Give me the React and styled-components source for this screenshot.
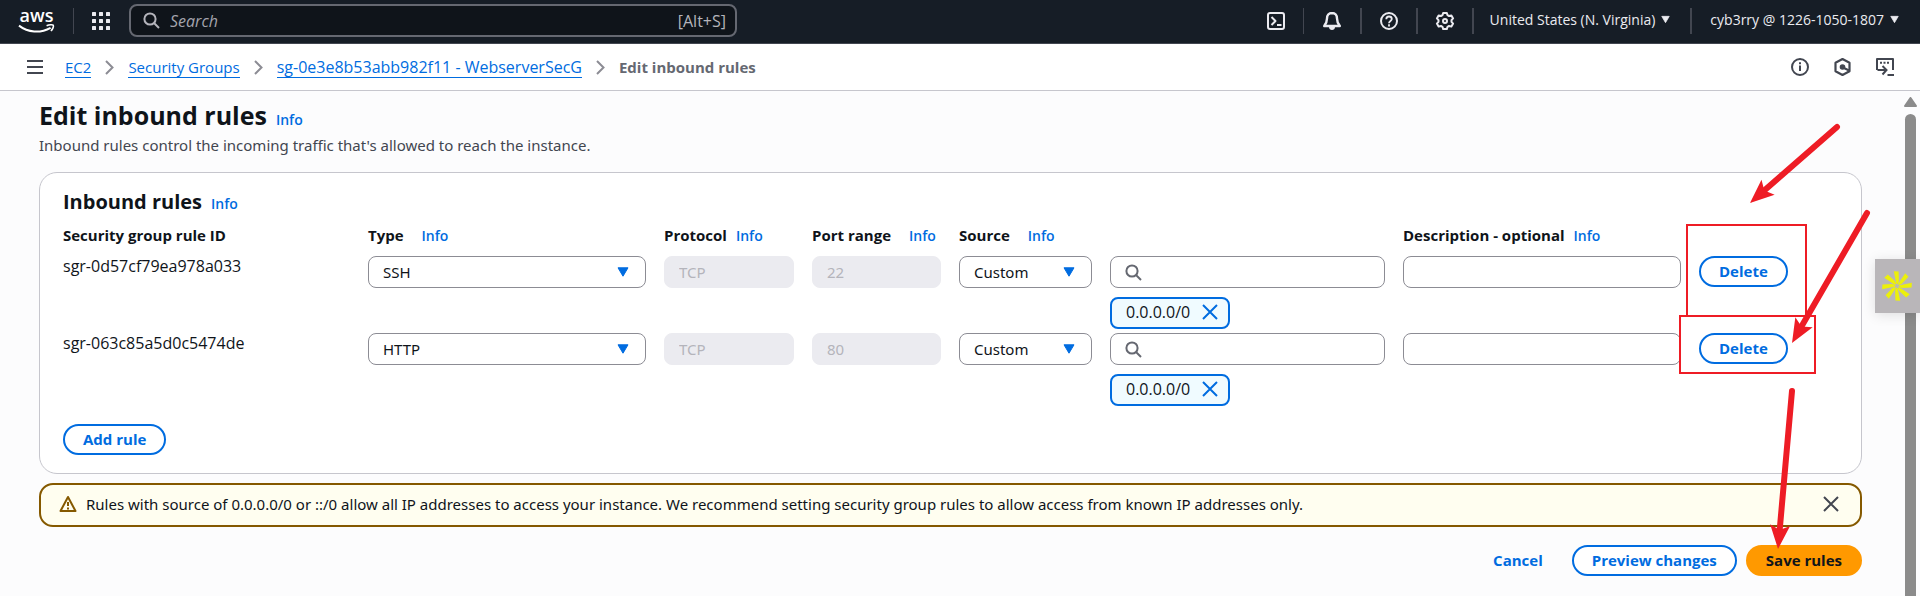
import React from "react";
import styled, { createGlobalStyle, css } from "styled-components";

const BLUE = "#006ce0";
const INK = "#0f141a";
const RED = "#ee1c25";
const HEADING_FONT = `"Open Sans", "Noto Sans", sans-serif`;

const GlobalStyle = createGlobalStyle`
  *, *::before, *::after { box-sizing: border-box; }
  body {
    margin: 0;
    background: #fcfcfd;
    color: ${INK};
    font-family: "Noto Sans", "Open Sans", sans-serif;
    font-size: 15px;
    line-height: 22px;
  }
  button, input, select { font: inherit; color: inherit; }
  svg { display: block; flex: none; }
`;

const Page = styled.div`
  position: relative;
  display: flex;
  flex-direction: column;
  min-height: 100vh;
  overflow: hidden;
`;

/* Global navigation */
const TopBar = styled.header`
  display: flex;
  align-items: flex-start;
  height: 44px;
  padding: 4px 21px 0 18px;
  background: #161d26;
  border-bottom: 1px solid #424650;
  color: #ebebf0;
  font-family: ${HEADING_FONT};
  font-size: 14px;
`;

const Cluster = styled.div`
  display: flex;
  align-items: center;
  height: 33px;
`;

const NavActions = styled(Cluster)`
  margin-left: auto;
`;

const Divider = styled.span`
  width: ${(p) => (p.$thin ? 1 : 2)}px;
  height: 26px;
  background: #424650;
`;

const LogoLink = styled.a`
  display: block;
  margin-right: 18px;
`;

const IconButton = styled.button`
  display: flex;
  align-items: center;
  justify-content: center;
  padding: 0 ${(p) => p.$pad || 0}px;
  border: 0;
  background: none;
  color: inherit;
  cursor: pointer;
`;

const NavSearch = styled.label`
  display: flex;
  align-items: center;
  gap: 10px;
  flex: 0 1 608px;
  height: 33px;
  margin-left: 1px;
  padding: 0 9px 0 12px;
  border: 2px solid #656871;
  border-radius: 8px;
  background: ${INK};
  color: #b4b4bb;
  font-size: 16px;
`;

const NavSearchInput = styled.input`
  flex: 1;
  min-width: 0;
  padding: 0;
  border: 0;
  outline: 0;
  background: none;
  &::placeholder { color: #a4a4ad; font-style: italic; opacity: 1; }
`;

const NavMenu = styled.button`
  display: flex;
  align-items: center;
  gap: 6px;
  padding: 0 ${(p) => (p.$last ? 0 : 20)}px 2px ${(p) => (p.$last ? 18 : 16)}px;
  border: 0;
  background: none;
  color: #ebebf0;
  white-space: nowrap;
  cursor: pointer;
`;

/* Breadcrumb bar */
const CrumbBar = styled.div`
  display: flex;
  align-items: center;
  height: 47px;
  padding: 0 26px 0 27px;
  background: #fff;
  border-bottom: 1px solid #c6c6cd;
  color: #424650;
`;

const Crumbs = styled.nav`
  display: flex;
  align-items: center;
  gap: 14px;
  margin-left: 22px;
`;

const CrumbLink = styled.a`
  color: ${BLUE};
  text-decoration: none;
  border-bottom: 1px solid ${BLUE};
  font-family: ${HEADING_FONT};
  font-size: ${(p) => (p.$resource ? 16 : 15)}px;
  line-height: 20px;
`;

const CrumbCurrent = styled.span`
  color: #656871;
  font-family: ${HEADING_FONT};
  font-weight: 700;
  line-height: 20px;
`;

const Tools = styled.div`
  display: flex;
  gap: 25px;
  margin-left: auto;
`;

/* Content */
const Body = styled.div`
  display: flex;
  flex: 1;
`;

const Main = styled.main`
  flex: 1;
  min-width: 0;
  padding: 8px 39px 20px;
`;

const TitleRow = styled.div`
  display: flex;
  align-items: baseline;
  gap: 9px;
`;

const Title = styled.h1`
  margin: 0;
  font-family: ${HEADING_FONT};
  font-size: 25px;
  line-height: 32px;
  font-weight: 700;
`;

const Subtitle = styled.p`
  margin: 3px 0 0;
  color: #424650;
`;

const Panel = styled.section`
  margin-top: 16px;
  padding: 15px 23px 18px;
  border: 1px solid #c6c6cd;
  border-radius: 18px;
  background: #fff;
`;

const PanelTitle = styled.h2`
  margin: 0;
  font-family: ${HEADING_FONT};
  font-size: 20px;
  line-height: 28px;
  font-weight: 700;
`;

const InfoLink = styled.a`
  color: ${BLUE};
  font-family: ${HEADING_FONT};
  font-size: 14px;
  line-height: 16px;
  font-weight: 600;
  text-decoration: none;
`;

const RulesTable = styled.table`
  display: block;
  margin-top: 8px;
`;

const TableHead = styled.thead`
  display: block;
  margin-bottom: 10px;
`;

const TableRows = styled.tbody`
  display: grid;
  gap: 4px;
`;

const TableRow = styled.tr`
  display: grid;
  grid-template-columns:
    minmax(0, 287fr) minmax(0, 278fr) minmax(0, 130fr) minmax(0, 129fr)
    minmax(0, 133fr) minmax(0, 275fr) minmax(0, 278fr) minmax(89px, 139fr);
  column-gap: 18px;
`;

const HeadCell = styled.th`
  display: flex;
  align-items: baseline;
  gap: ${(p) => p.$gap || 10}px;
  padding: 0;
  text-align: left;
  font-family: ${HEADING_FONT};
  font-weight: 700;
  white-space: nowrap;
`;

const Cell = styled.td`
  display: block;
  padding: 0;
`;

const RuleIdCell = styled(Cell)`
  font-family: ${HEADING_FONT};
  font-size: 16px;
  line-height: 20px;
`;

const fieldBox = css`
  width: 100%;
  height: 32px;
  border: 1px solid #8c8c94;
  border-radius: 8px;
  background: #fff;
  outline: 0;
`;

const TextInput = styled.input`
  ${fieldBox}
  display: block;
  padding: 0 14px;
  &:disabled {
    border-color: #ebebf0;
    background: #ebebf0;
    color: #b4b4bb;
  }
`;

const SelectWrap = styled.div`
  display: grid;
  align-items: center;
  justify-items: end;
  color: ${BLUE};
  & > * { grid-area: 1 / 1; }
  & > svg { margin-right: 17px; pointer-events: none; }
`;

const SelectBox = styled.select`
  ${fieldBox}
  appearance: none;
  padding: 0 30px 0 14px;
  color: ${INK};
`;

const SearchField = styled.label`
  ${fieldBox}
  display: flex;
  align-items: center;
  gap: 8px;
  padding: 0 14px;
  color: #656871;
`;

const BareInput = styled.input`
  flex: 1;
  min-width: 0;
  padding: 0;
  border: 0;
  outline: 0;
  background: none;
`;

const Token = styled.span`
  display: inline-flex;
  align-items: center;
  justify-content: space-between;
  width: 120px;
  height: 32px;
  margin-top: 9px;
  padding: 0 10px 2px 14px;
  border: 2px solid ${BLUE};
  border-radius: 8px;
  background: #f0fbff;
  font-family: ${HEADING_FONT};
  font-size: 16px;
  vertical-align: top;
`;

const TokenRemove = styled(IconButton)`
  color: ${BLUE};
`;

const Button = styled.button`
  height: 31px;
  padding: 0 18px 2px;
  border: 2px solid ${BLUE};
  border-radius: 20px;
  background: #fff;
  color: ${BLUE};
  font-family: ${HEADING_FONT};
  font-weight: 700;
  white-space: nowrap;
  cursor: pointer;
  ${(p) => p.$kind === "primary" && css`
    border-color: #ff9900;
    background: #ff9900;
    color: ${INK};
  `}
  ${(p) => p.$kind === "link" && css`
    border-color: transparent;
    background: none;
  `}
`;

const AddRow = styled.div`
  margin-top: 18px;
`;

const Alert = styled.div`
  display: flex;
  align-items: center;
  gap: 9px;
  height: 44px;
  margin-top: 9px;
  padding: 0 14px 2px 18px;
  border: 2px solid #855900;
  border-radius: 14px;
  background: #fffef0;
`;

const AlertText = styled.span`
  flex: 1;
`;

const Dismiss = styled(IconButton)`
  color: #424650;
`;

const Footer = styled.footer`
  display: flex;
  justify-content: flex-end;
  gap: 9px;
  margin-top: 18px;
`;

/* Scroll track and side tab */
const ScrollTrack = styled.div`
  display: flex;
  flex-direction: column;
  align-items: center;
  gap: 7px;
  width: 19px;
  padding-top: 6px;
`;

const ScrollThumb = styled.div`
  flex: 1;
  width: 11px;
  border-radius: 6px 6px 0 0;
  background: #8b8b8b;
`;

const SideTab = styled.button`
  position: absolute;
  top: 259px;
  right: 0;
  width: 45px;
  height: 54px;
  padding: 0 0 0 7px;
  border: 0;
  background: #b9b6b9;
  box-shadow: 0 2px 12px rgba(0, 0, 0, 0.12);
`;

const Markup = styled.svg`
  position: absolute;
  top: 0;
  right: 0;
  pointer-events: none;
`;

const Caret = ({ w = 12, h = 10 }) => (
  <svg width={w} height={h} viewBox="0 0 12 10" aria-hidden="true">
    <path d="M1 .8h10L6 9.2z" fill="currentColor" stroke="currentColor" strokeWidth="1" strokeLinejoin="round" />
  </svg>
);

const Magnifier = () => (
  <svg width="17" height="17" viewBox="0 0 17 17" fill="none" stroke="currentColor" strokeWidth="2" aria-hidden="true">
    <circle cx="7" cy="7" r="5.6" />
    <path d="M11 11l5 5" />
  </svg>
);

const Cross = () => (
  <svg width="16" height="16" viewBox="0 0 16 16" fill="none" stroke="currentColor" strokeWidth="2" aria-hidden="true">
    <path d="M1 1l14 14M15 1L1 15" />
  </svg>
);

const Chevron = () => (
  <svg width="9" height="15" viewBox="0 0 9 15" fill="none" stroke="#8c8c94" strokeWidth="2" aria-hidden="true">
    <path d="M1 1l6.500 6.500L1 14" />
  </svg>
);

const AwsLogo = () => (
  <svg width="37" height="33" viewBox="0 -7 37 33" role="img" aria-label="aws">
    <text x="18.500" y="11" textAnchor="middle" fontFamily="Open Sans, Noto Sans, sans-serif" fontSize="18" fontWeight="600" fill="#fff">aws</text>
    <path d="M1 14.600C10 21.600 22 22.600 32.600 16.800" fill="none" stroke="#fff" strokeWidth="2" />
    <path d="M28.600 14.800c2.800-1.300 6.200-1.200 6.700-.5.500.9-.5 4-2.400 5.700" fill="none" stroke="#fff" strokeWidth="1.600" />
  </svg>
);

const AppsGrid = () => (
  <svg width="18" height="18" viewBox="0 0 18 18" fill="currentColor" aria-hidden="true">
    {[0, 7, 14].map((y) => [0, 7, 14].map((x) => <rect key={`${x}-${y}`} x={x} y={y} width="4" height="4" rx=".5" />))}
  </svg>
);

const Stroke = ({ children }) => (
  <svg width="20" height="20" viewBox="0 0 20 20" fill="none" stroke="currentColor" strokeWidth="2" strokeLinejoin="round" aria-hidden="true">
    {children}
  </svg>
);

const ShellIcon = () => (
  <Stroke>
    <rect x="2" y="2" width="16" height="16" rx="2" />
    <path d="M5.500 6l4 4-4 4M11 14h4.500" />
  </Stroke>
);

const BellIcon = () => (
  <Stroke>
    <path d="M10 2c-3.300 0-5 2.400-5 5.400 0 3.400-.8 5-2.800 7.600h15.600C15.800 12.400 15 10.800 15 7.400 15 4.400 13.300 2 10 2z" strokeWidth="2.400" />
    <path d="M7 16h6c0 2-1.300 3-3 3s-3-1-3-3z" fill="currentColor" stroke="none" />
  </Stroke>
);

const HelpIcon = () => (
  <Stroke>
    <circle cx="10" cy="10" r="8" />
    <path d="M7.300 8.200C7.300 6.500 8.500 5.500 10 5.500s2.800 1 2.800 2.500c0 1.900-2.800 2-2.800 4.200M10 13.300v2.200" strokeWidth="1.800" />
  </Stroke>
);

const GearIcon = () => (
  <Stroke>
    <path d="M8.200 1.900h3.600l.7 2.300 1.500.8 2.400-.6 1.700 3-1.600 1.800v1.600l1.600 1.800-1.700 3-2.400-.6-1.500.8-.7 2.300H8.200l-.7-2.300-1.500-.8-2.400.6-1.700-3 1.600-1.800V9.200L1.900 7.400l1.700-3L6 5l1.500-.8z" />
    <circle cx="10" cy="10" r="2" />
  </Stroke>
);

const MenuIcon = () => (
  <svg width="16" height="14" viewBox="0 0 16 14" fill="currentColor" aria-hidden="true">
    <path d="M0 0h16v2H0zM0 6h16v2H0zM0 12h16v2H0z" />
  </svg>
);

const InfoIcon = () => (
  <svg width="18" height="18" viewBox="0 0 18 18" fill="none" stroke="currentColor" strokeWidth="2" aria-hidden="true">
    <circle cx="9" cy="9" r="8" />
    <path d="M9 7.500V13M9 4.200v2" />
  </svg>
);

const HexIcon = () => (
  <svg width="17" height="18" viewBox="0 0 17 18" fill="none" stroke="currentColor" strokeWidth="2" strokeLinejoin="round" aria-hidden="true">
    <path d="M8.500 1l7 3.700v8.600l-7 3.700-7-3.700V4.700z" strokeWidth="2.200" />
    <path d="M9 9.500l6 3" />
    <circle cx="8.500" cy="9" r="2.800" fill="currentColor" stroke="none" />
  </svg>
);

const PanelIcon = () => (
  <svg width="18" height="18" viewBox="0 0 18 18" fill="none" stroke="currentColor" strokeWidth="2" aria-hidden="true">
    <path d="M1 12V1h16v11" strokeLinejoin="round" />
    <path d="M4 4.800h2M7.500 4.800h2M11 4.800h2" />
    <path d="M1.500 12h8.500M6.500 8l4 4-4 4.500M11.500 17H18" />
  </svg>
);

const WarningIcon = () => (
  <svg width="18" height="18" viewBox="0 0 18 18" fill="none" stroke="#855900" strokeWidth="2" strokeLinejoin="round" aria-hidden="true">
    <path d="M9 2l7.500 14h-15z" />
    <path d="M9 7v4M9 12.500v2" />
  </svg>
);

const SparkIcon = () => (
  <svg width="30" height="30" viewBox="-15 -15 30 30" fill="#ecf00a" aria-hidden="true">
    {[0, 45, 90, 135, 180, 225, 270, 315].map((a) => (
      <path key={a} transform={`rotate(${a})`} d="M-3.200-14.800l4.800.2L1.900-5 .8-1.500-.8-3z" />
    ))}
  </svg>
);

const ARROWS = [
  { from: [177, 127], to: [90, 203] },
  { from: [207, 213], to: [132, 343] },
  { from: [132, 391], to: [118, 549] },
];

const Annotations = () => (
  <Markup width="260" height="596" viewBox="0 0 260 596" aria-hidden="true">
    <path d="M27 316V225h119v91" fill="none" stroke={RED} strokeWidth="2" />
    <rect x="20" y="316" width="135" height="57" fill="none" stroke={RED} strokeWidth="2" />
    {ARROWS.map(({ from, to }) => {
      const angle = (Math.atan2(to[1] - from[1], to[0] - from[0]) * 180) / Math.PI;
      const length = Math.hypot(to[0] - from[0], to[1] - from[1]);
      return (
        <g key={to.join()} transform={`translate(${to[0]} ${to[1]}) rotate(${angle})`}>
          <path d={`M${-length} 0H-14`} stroke={RED} strokeWidth="6" strokeLinecap="round" />
          <path d="M0 0L-24-10-19 0-24 10z" fill={RED} />
        </g>
      );
    })}
  </Markup>
);

const COLUMNS = [
  { id: "col-id", label: "Security group rule ID" },
  { id: "col-type", label: "Type", gap: 18 },
  { id: "col-protocol", label: "Protocol", gap: 9 },
  { id: "col-port", label: "Port range", gap: 18 },
  { id: "col-source", label: "Source", gap: 18 },
  { id: "col-search", label: "" },
  { id: "col-description", label: "Description - optional", gap: 9 },
  { id: "col-actions", label: "" },
];

const RULES = [
  { id: "sgr-0d57cf79ea978a033", type: "SSH", port: "22" },
  { id: "sgr-063c85a5d0c5474de", type: "HTTP", port: "80" },
];

const Rule = ({ rule }) => (
  <TableRow>
    <RuleIdCell>{rule.id}</RuleIdCell>
    <Cell>
      <SelectWrap>
        <SelectBox aria-labelledby="col-type" defaultValue={rule.type}>
          <option>SSH</option>
          <option>HTTP</option>
        </SelectBox>
        <Caret />
      </SelectWrap>
    </Cell>
    <Cell><TextInput aria-labelledby="col-protocol" defaultValue="TCP" disabled /></Cell>
    <Cell><TextInput aria-labelledby="col-port" defaultValue={rule.port} disabled /></Cell>
    <Cell>
      <SelectWrap>
        <SelectBox aria-labelledby="col-source" defaultValue="Custom">
          <option>Custom</option>
        </SelectBox>
        <Caret />
      </SelectWrap>
    </Cell>
    <Cell>
      <SearchField>
        <Magnifier />
        <BareInput type="text" aria-label="Source address" />
      </SearchField>
      <Token>
        0.0.0.0/0
        <TokenRemove type="button" aria-label="Remove 0.0.0.0/0"><Cross /></TokenRemove>
      </Token>
    </Cell>
    <Cell><TextInput aria-labelledby="col-description" /></Cell>
    <Cell><Button type="button">Delete</Button></Cell>
  </TableRow>
);

export default function App() {
  return (
    <Page>
      <GlobalStyle />
      <TopBar>
        <Cluster>
          <LogoLink href="#home"><AwsLogo /></LogoLink>
          <Divider $thin />
          <IconButton type="button" $pad={18} aria-label="Services"><AppsGrid /></IconButton>
        </Cluster>
        <NavSearch>
          <Magnifier />
          <NavSearchInput type="text" placeholder="Search" aria-label="Search" />
          <span>[Alt+S]</span>
        </NavSearch>
        <NavActions>
          <IconButton type="button" $pad={17} aria-label="CloudShell"><ShellIcon /></IconButton>
          <Divider $thin />
          <IconButton type="button" $pad={18} aria-label="Notifications"><BellIcon /></IconButton>
          <Divider />
          <IconButton type="button" $pad={17} aria-label="Help"><HelpIcon /></IconButton>
          <Divider />
          <IconButton type="button" $pad={17} aria-label="Settings"><GearIcon /></IconButton>
          <Divider />
          <NavMenu type="button">United States (N. Virginia)<Caret w={9} h={9} /></NavMenu>
          <Divider />
          <NavMenu type="button" $last>cyb3rry @ 1226-1050-1807<Caret w={9} h={9} /></NavMenu>
        </NavActions>
      </TopBar>

      <CrumbBar>
        <IconButton type="button" aria-label="Open navigation"><MenuIcon /></IconButton>
        <Crumbs aria-label="Breadcrumbs">
          <CrumbLink href="#ec2">EC2</CrumbLink>
          <Chevron />
          <CrumbLink href="#groups">Security Groups</CrumbLink>
          <Chevron />
          <CrumbLink href="#group" $resource>sg-0e3e8b53abb982f11 - WebserverSecG</CrumbLink>
          <Chevron />
          <CrumbCurrent>Edit inbound rules</CrumbCurrent>
        </Crumbs>
        <Tools>
          <IconButton type="button" aria-label="Info panel"><InfoIcon /></IconButton>
          <IconButton type="button" aria-label="Amazon Q"><HexIcon /></IconButton>
          <IconButton type="button" aria-label="Split panel"><PanelIcon /></IconButton>
        </Tools>
      </CrumbBar>

      <Body>
        <Main>
          <TitleRow>
            <Title>Edit inbound rules</Title>
            <InfoLink href="#info">Info</InfoLink>
          </TitleRow>
          <Subtitle>Inbound rules control the incoming traffic that's allowed to reach the instance.</Subtitle>

          <Panel>
            <TitleRow>
              <PanelTitle>Inbound rules</PanelTitle>
              <InfoLink href="#info">Info</InfoLink>
            </TitleRow>
            <RulesTable>
              <TableHead>
                <TableRow>
                  {COLUMNS.map((c) => (
                    <HeadCell key={c.id} scope="col" $gap={c.gap}>
                      <span id={c.id}>{c.label}</span>
                      {c.gap && <InfoLink href="#info">Info</InfoLink>}
                    </HeadCell>
                  ))}
                </TableRow>
              </TableHead>
              <TableRows>
                {RULES.map((r) => <Rule key={r.id} rule={r} />)}
              </TableRows>
            </RulesTable>
            <AddRow><Button type="button">Add rule</Button></AddRow>
          </Panel>

          <Alert role="alert">
            <WarningIcon />
            <AlertText>
              Rules with source of 0.0.0.0/0 or ::/0 allow all IP addresses to access your instance. We recommend setting security group rules to allow access from known IP addresses only.
            </AlertText>
            <Dismiss type="button" aria-label="Dismiss" $pad={7}><Cross /></Dismiss>
          </Alert>

          <Footer>
            <Button type="button" $kind="link">Cancel</Button>
            <Button type="button">Preview changes</Button>
            <Button type="button" $kind="primary">Save rules</Button>
          </Footer>
        </Main>
        <ScrollTrack>
          <svg width="13" height="10" viewBox="0 0 13 10" aria-hidden="true">
            <path d="M6.500 1L12 9H1z" fill="#8b8b8b" stroke="#8b8b8b" strokeLinejoin="round" strokeWidth="2" />
          </svg>
          <ScrollThumb />
        </ScrollTrack>
      </Body>

      <SideTab type="button" aria-label="Assistant"><SparkIcon /></SideTab>
      <Annotations />
    </Page>
  );
}
